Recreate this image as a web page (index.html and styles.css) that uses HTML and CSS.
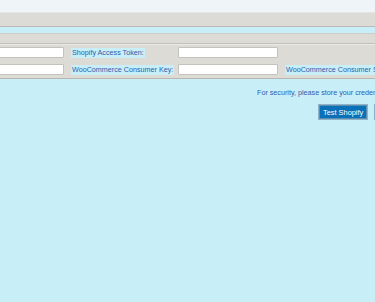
FILE: index.html
```html
<!DOCTYPE html>
<html lang="en">
<head>
    <meta charset="UTF-8">
    <meta name="viewport" content="width=device-width, initial-scale=1.0">
    <title>Store Connector</title>
    <link rel="stylesheet" href="styles.css">
</head>
<body>
    <div class="topbar"></div>
    <div class="toolbar"></div>
    <div class="spacer"></div>

    <div class="panel">
        <div class="panel-head"></div>
        <form class="fields" id="credForm">
            <input type="text" id="shopifyStore">
            <label for="shopifyToken">Shopify Access Token:</label>
            <input type="password" id="shopifyToken">
            <span></span>

            <input type="text" id="wooUrl">
            <label for="wooKey">WooCommerce Consumer Key:</label>
            <input type="text" id="wooKey">
            <label for="wooSecret">WooCommerce Consumer Secret:</label>
        </form>
    </div>

    <div class="actions">
        <p class="notice">For security, please store your credentials in environment variables.</p>
        <div class="buttons">
            <button type="button" id="testShopify">Test Shopify</button>
            <button type="button" id="testWoo">Test WooCommerce</button>
        </div>
    </div>
</body>
</html>
```

FILE: styles.css
```css
body {
    font-family: 'Liberation Sans', Arial, sans-serif;
    font-size: 7.2px;
    margin: 0;
    background: #c8eff8;
    color: #2f5cac;
    overflow: hidden;
}
.topbar {
    height: 12px;
    background: #eef4f8;
    border-bottom: 1px solid #e4e6e6;
}
.toolbar {
    height: 13px;
    background: #dddbd6;
    border-bottom: 1px solid #bcbab4;
}
.spacer {
    height: 6px;
}
.panel {
    background: #dddbd6;
    border-top: 1px solid #cfcdc8;
    border-bottom: 1px solid #b8b6b0;
    padding-bottom: 3px;
}
.panel-head {
    height: 9px;
    border-bottom: 1px solid #c2c0ba;
    box-shadow: 0 1px 0 #ebeae6;
}
.fields {
    display: grid;
    grid-template-columns: 100px 100px 100px max-content;
    column-gap: 7px;
    row-gap: 6px;
    align-items: center;
    margin: 3px 0 0 -36px;
}
.fields input {
    box-sizing: border-box;
    width: 100px;
    height: 11px;
    margin: 0;
    padding: 0 2px;
    border: 1px solid #c4c2bc;
    border-radius: 1px;
    background: white;
    font: inherit;
}
.fields label {
    justify-self: start;
    background: #c8eff8;
    padding: 1px 1px;
    line-height: 8px;
    white-space: nowrap;
}
.actions {
    padding-top: 9px;
}
.notice {
    margin: 0 0 0 257px;
    line-height: 9px;
    white-space: nowrap;
}
.buttons {
    display: flex;
    gap: 6px;
    margin: 7px 0 0 318px;
}
button {
    box-sizing: border-box;
    height: 16px;
    padding: 0 4px;
    border: 1px solid #8fb2c6;
    box-shadow: inset 0 0 0 1px #5a8fb2;
    background: #0a70b8;
    color: white;
    font: inherit;
    font-size: 7.4px;
    white-space: nowrap;
    cursor: pointer;
}
```
